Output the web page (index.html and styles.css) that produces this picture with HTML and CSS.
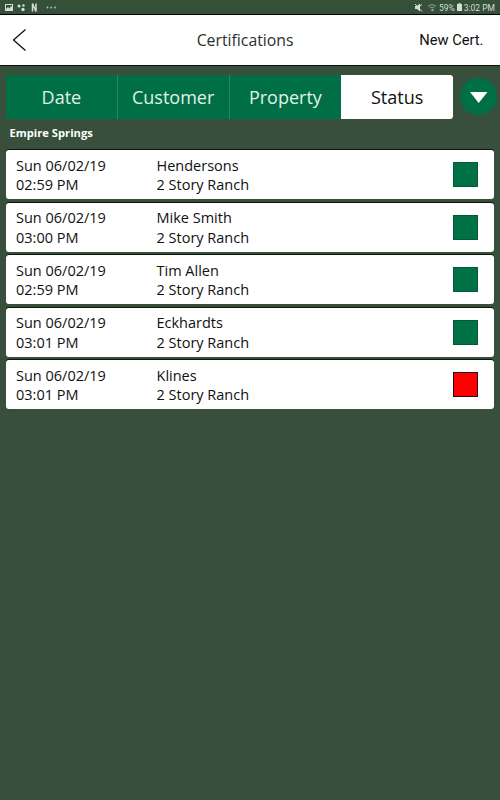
FILE: index.html
```html
<!DOCTYPE html>
<html lang="en">
<head>
    <meta charset="UTF-8">
    <title>Certifications</title>
    <link rel="stylesheet" href="styles.css">
</head>
<body>
    <div class="status-bar">
        <div class="status-left">
            <svg width="60" height="14" viewBox="0 0 60 14">
                <path fill="#d5ddd7" fill-rule="evenodd" d="M5 4h8v7H5zM6 5v4l2-2 1.500 1.500L11 6l1 1V5z"/>
                <circle cx="19" cy="6" r="1.500" fill="#d5ddd7"/>
                <circle cx="23.500" cy="5.500" r="1.200" fill="#d5ddd7"/>
                <circle cx="23" cy="9.500" r="1.700" fill="#d5ddd7"/>
                <path fill="none" stroke="#d5ddd7" stroke-width="1.500" d="M32.500 11.500V3.500L36 11.500V3.500"/>
                <g fill="#b9c5bc">
                    <circle cx="47.500" cy="7.500" r=".9"/>
                    <circle cx="51.200" cy="7.500" r=".9"/>
                    <circle cx="55" cy="7.500" r=".9"/>
                </g>
            </svg>
        </div>
        <div class="status-right">
            <svg class="system-icons" width="23" height="14" viewBox="0 0 23 14">
                <path fill="#d5ddd7" d="M0 6h2l3-2.500v8L2 9H0z"/>
                <path stroke="#d5ddd7" d="M0 4l7 7.500M4.500 6.500L7 4.500"/>
                <path fill="none" stroke="#91a195" d="M13 6q4-3 8 0M14.500 8q2.500-2 5 0"/>
                <circle cx="17.500" cy="10" r="1.300" fill="#91a195"/>
            </svg>
            <span class="battery-text">59%</span>
            <svg class="battery" width="5" height="14" viewBox="0 0 5 14">
                <path fill="#d5ddd7" d="M1.500 3h2v1H5v7H0V4h1.500z"/>
            </svg>
            <span class="clock">3:02 PM</span>
        </div>
    </div>

    <div class="header">
        <svg class="back" width="16" height="24" viewBox="0 0 16 24">
            <path fill="none" stroke="#111" stroke-width="1.300" d="M13.500 1.500L1.500 12l12 10.500"/>
        </svg>
        <div class="title">Certifications</div>
        <div class="new-cert">New Cert.</div>
    </div>

    <div class="filters">
        <div class="tabs">
            <div class="tab">Date</div>
            <div class="tab">Customer</div>
            <div class="tab">Property</div>
            <div class="tab active">Status</div>
        </div>
        <div class="sort">
            <svg width="37" height="37" viewBox="0 0 37 37">
                <path fill="#fff" d="M10 14h17.500L18.700 25z"/>
            </svg>
        </div>
    </div>

    <div class="group-title">Empire Springs</div>

    <div class="list">
        <div class="row">
            <div class="date">Sun 06/02/19<br>02:59 PM</div>
            <div class="customer">Hendersons<br>2 Story Ranch</div>
            <div class="flag"></div>
        </div>
        <div class="row">
            <div class="date">Sun 06/02/19<br>03:00 PM</div>
            <div class="customer">Mike Smith<br>2 Story Ranch</div>
            <div class="flag"></div>
        </div>
        <div class="row">
            <div class="date">Sun 06/02/19<br>02:59 PM</div>
            <div class="customer">Tim Allen<br>2 Story Ranch</div>
            <div class="flag"></div>
        </div>
        <div class="row">
            <div class="date">Sun 06/02/19<br>03:01 PM</div>
            <div class="customer">Eckhardts<br>2 Story Ranch</div>
            <div class="flag"></div>
        </div>
        <div class="row">
            <div class="date">Sun 06/02/19<br>03:01 PM</div>
            <div class="customer">Klines<br>2 Story Ranch</div>
            <div class="flag failed"></div>
        </div>
    </div>
</body>
</html>
```
FILE: styles.css
```css
* {
    box-sizing: border-box;
}

body {
    margin: 0;
    min-height: 800px;
    background: #374f3b;
    font-family: "Open Sans", "Noto Sans", sans-serif;
    color: #111;
    overflow: hidden;
}

.status-bar {
    display: flex;
    justify-content: space-between;
    height: 14px;
    background: #345039;
}

.status-right {
    display: flex;
    align-items: center;
    padding: 2px 5px 0 0;
    font-family: Roboto, sans-serif;
    font-size: 8.5px;
    line-height: 12px;
    color: #d5ddd7;
}

.status-left svg,
.status-right svg {
    display: block;
}

.status-right svg {
    margin-top: -2px;
}

.system-icons {
    margin-right: 1px;
}

.battery {
    margin: 0 2px;
}

.header {
    display: flex;
    align-items: center;
    height: 52px;
    padding: 0 16.5px 0 12px;
    background: #fff;
    border-top: 1px solid #000;
    border-bottom: 1px solid #111;
}

.back {
    width: 16px;
}

.title {
    flex: 1;
    padding-left: 43px;
    text-align: center;
    font-size: 15.8px;
    color: #2b2f2c;
}

.new-cert {
    font-family: Roboto, sans-serif;
    font-size: 14.7px;
}

.filters {
    display: flex;
    align-items: center;
    height: 44px;
    margin: 8.5px 0 0 6px;
}

.tabs {
    display: flex;
    width: 447px;
    height: 44px;
    border-radius: 3px;
    overflow: hidden;
}

.tab {
    width: 25%;
    background: #006f45;
    border-right: 1px solid #2c8560;
    color: #e0f2e8;
    font-size: 18px;
    line-height: 45px;
    text-align: center;
}

.tab:nth-child(3) {
    border-right: none;
}

.tab.active {
    background: #fff;
    border-right: none;
    color: #111;
}

.sort {
    width: 37px;
    height: 37px;
    margin-left: 6.5px;
    border-radius: 50%;
    background: #006f45;
}

.sort svg {
    display: block;
}

.group-title {
    height: 31.5px;
    padding-left: 9.5px;
    font-size: 11.2px;
    font-weight: 700;
    line-height: 28px;
    color: #fff;
}

.list {
    display: flex;
    flex-direction: column;
    gap: 3.5px;
    padding: 0 6px;
}

.row {
    display: flex;
    align-items: center;
    height: 49px;
    padding: 0 16px 0 10px;
    background: #fff;
    border-radius: 3px;
    box-shadow: 0 -1px 0 #0d150f;
    font-size: 14.5px;
    line-height: 19.5px;
}

.date,
.customer {
    padding-top: 1px;
}

.date {
    width: 140.5px;
}

.customer {
    flex: 1;
}

.flag {
    width: 25px;
    height: 25px;
    background: #007145;
    border: 1px solid #075a38;
}

.flag.failed {
    background: #fe0000;
    border-color: #2a0808;
}
```
